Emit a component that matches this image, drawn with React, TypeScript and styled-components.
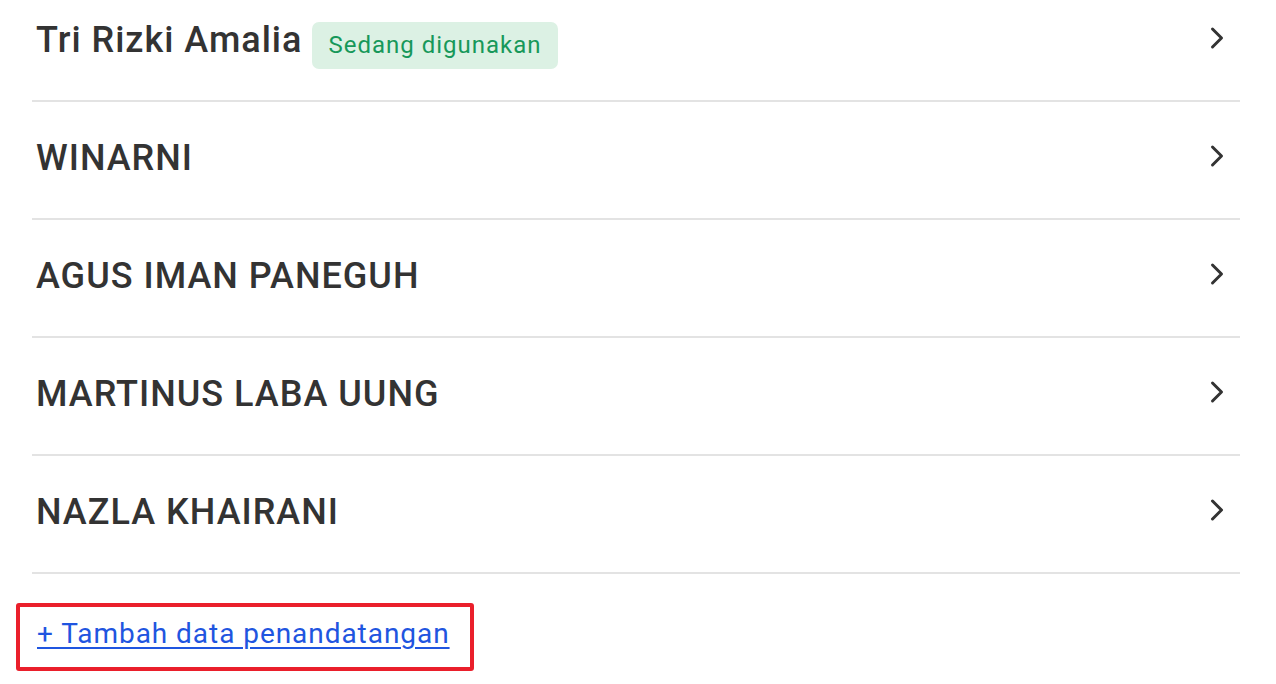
import styled, { createGlobalStyle } from "styled-components"

const GlobalStyle = createGlobalStyle`
  html, body {
    margin: 0;
    padding: 0;
    background: #ffffff;
    font-family: Roboto, "Noto Sans", sans-serif;
    overflow: hidden;
  }
`

const Page = styled.div`
  width: 1276px;
  height: 684px;
  overflow: hidden;
`

const List = styled.ul`
  list-style: none;
  margin: -16px 36px 0 32px;
  padding: 0;
`

const Row = styled.li`
  box-sizing: border-box;
  display: flex;
  align-items: center;
  justify-content: space-between;
  height: 118px;
  padding: 0 16px 4px 4px;
  border-bottom: 2px solid #e3e3e3;
`

const NameWrap = styled.div`
  display: flex;
  align-items: center;
  gap: 10px;
`

const Name = styled.span`
  font-size: 36px;
  font-weight: 500;
  color: #333333;
  letter-spacing: 1px;
`

const Badge = styled.span`
  display: inline-flex;
  align-items: center;
  height: 47px;
  padding: 0 16px;
  border-radius: 7px;
  background: #dcf1e4;
  color: #17985a;
  font-size: 24px;
  letter-spacing: 1px;
  margin-top: 10px;
`

const Chevron = styled.svg`
  width: 14px;
  height: 24px;
  flex: none;
  margin-bottom: 5px;
`

const Footer = styled.div`
  padding: 29px 0 0 16px;
`

const Highlight = styled.div`
  box-sizing: border-box;
  display: flex;
  align-items: center;
  width: 458px;
  height: 68px;
  border: 4px solid #ea1f2b;
  border-radius: 3px;
  padding: 0 0 8px 17px;
`

const AddLink = styled.a`
  color: #1f55e0;
  font-size: 28px;
  letter-spacing: 0.95px;
  text-decoration: underline;
  text-underline-offset: 4px;
  text-decoration-thickness: 2px;
  cursor: pointer;
`

const people = [
  { name: "Tri Rizki Amalia", active: true },
  { name: "WINARNI" },
  { name: "AGUS IMAN PANEGUH" },
  { name: "MARTINUS LABA UUNG" },
  { name: "NAZLA KHAIRANI" },
]

function ChevronRight() {
  return (
    <Chevron viewBox="0 0 14 24" fill="none">
      <path
        d="M2.5 3 L11.5 12 L2.5 21"
        stroke="#333333"
        strokeWidth="3"
        strokeLinecap="round"
        strokeLinejoin="round"
      />
    </Chevron>
  )
}

export default function App() {
  return (
    <Page>
      <GlobalStyle />
      <List>
        {people.map((p) => (
          <Row key={p.name}>
            <NameWrap>
              <Name>{p.name}</Name>
              {p.active && <Badge>Sedang digunakan</Badge>}
            </NameWrap>
            <ChevronRight />
          </Row>
        ))}
      </List>
      <Footer>
        <Highlight>
          <AddLink>+ Tambah data penandatangan</AddLink>
        </Highlight>
      </Footer>
    </Page>
  )
}
